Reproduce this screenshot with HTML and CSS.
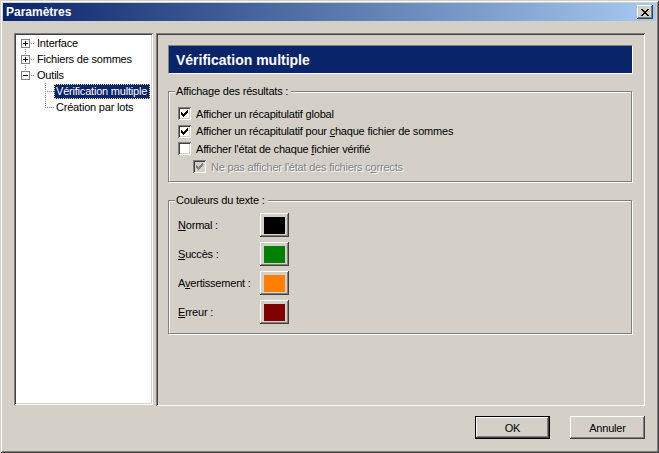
FILE: index.html
```html
<!DOCTYPE html>
<html lang="fr">
<head>
<meta charset="utf-8">
<title>Paramètres</title>
<link rel="stylesheet" href="styles.css">
</head>
<body>
<div class="window">
  <div class="titlebar">
    <span class="title">Paramètres</span>
    <button class="close" type="button" aria-label="Fermer">
      <svg width="8" height="7" viewBox="0 0 8 7" shape-rendering="crispEdges"><path fill="#000" d="M0 0h2v1h-2z M6 0h2v1h-2z M1 1h2v1h-2z M5 1h2v1h-2z M2 2h4v1h-4z M3 3h2v1h-2z M2 4h4v1h-4z M1 5h2v1h-2z M5 5h2v1h-2z M0 6h2v1h-2z M6 6h2v1h-2z"/></svg>
    </button>
  </div>
  <div class="client">
    <div class="main">
      <div class="tree">
        <div class="node">
          <svg class="gut0" width="19" height="16" viewBox="0 0 19 16" shape-rendering="crispEdges">
            <rect x="5.5" y="4.5" width="8" height="8" fill="#fff" stroke="#808080"/>
            <path fill="#000" d="M7 8h5v1h-5z M9 6h1v5h-1z"/>
            <path fill="#808080" d="M15 8h1v1h-1z M17 8h1v1h-1z M9 14h1v1h-1z"/>
          </svg>
          <span class="label">Interface</span>
        </div>
        <div class="node">
          <svg class="gut0" width="19" height="16" viewBox="0 0 19 16" shape-rendering="crispEdges">
            <rect x="5.5" y="4.5" width="8" height="8" fill="#fff" stroke="#808080"/>
            <path fill="#000" d="M7 8h5v1h-5z M9 6h1v5h-1z"/>
            <path fill="#808080" d="M15 8h1v1h-1z M17 8h1v1h-1z M9 0h1v1h-1z M9 2h1v1h-1z M9 14h1v1h-1z"/>
          </svg>
          <span class="label">Fichiers de sommes</span>
        </div>
        <div class="node">
          <svg class="gut0" width="19" height="16" viewBox="0 0 19 16" shape-rendering="crispEdges">
            <rect x="5.5" y="4.5" width="8" height="8" fill="#fff" stroke="#808080"/>
            <path fill="#000" d="M7 8h5v1h-5z"/>
            <path fill="#808080" d="M15 8h1v1h-1z M17 8h1v1h-1z M9 0h1v1h-1z M9 2h1v1h-1z"/>
          </svg>
          <span class="label">Outils</span>
        </div>
        <div class="node">
          <svg class="gut1" width="38" height="16" viewBox="0 0 38 16" shape-rendering="crispEdges">
            <path fill="#808080" d="M29 0h1v1h-1z M29 2h1v1h-1z M29 4h1v1h-1z M29 6h1v1h-1z M29 8h1v1h-1z M29 10h1v1h-1z M29 12h1v1h-1z M29 14h1v1h-1z M31 8h1v1h-1z M33 8h1v1h-1z M35 8h1v1h-1z M37 8h1v1h-1z"/>
          </svg>
          <span class="label selected">Vérification multiple</span>
        </div>
        <div class="node">
          <svg class="gut1" width="38" height="16" viewBox="0 0 38 16" shape-rendering="crispEdges">
            <path fill="#808080" d="M29 0h1v1h-1z M29 2h1v1h-1z M29 4h1v1h-1z M29 6h1v1h-1z M29 8h1v1h-1z M31 8h1v1h-1z M33 8h1v1h-1z M35 8h1v1h-1z M37 8h1v1h-1z"/>
          </svg>
          <span class="label">Création par lots</span>
        </div>
      </div>

      <div class="panel">
        <div class="header">Vérification multiple</div>

        <div class="group g1">
          <div class="legend">Affichage des résultats :</div>
          <div class="checks">
            <div class="crow">
              <span class="cb"><svg width="7" height="7" viewBox="0 0 7 7" shape-rendering="crispEdges"><path d="M0 2h1v3h-1z M1 3h1v3h-1z M2 4h1v3h-1z M3 3h1v3h-1z M4 2h1v3h-1z M5 1h1v3h-1z M6 0h1v3h-1z"/></svg></span>
              <span class="ctext">Afficher un récapitulatif <u>g</u>lobal</span>
            </div>
            <div class="crow">
              <span class="cb"><svg width="7" height="7" viewBox="0 0 7 7" shape-rendering="crispEdges"><path d="M0 2h1v3h-1z M1 3h1v3h-1z M2 4h1v3h-1z M3 3h1v3h-1z M4 2h1v3h-1z M5 1h1v3h-1z M6 0h1v3h-1z"/></svg></span>
              <span class="ctext">Afficher un récapitulatif pour <u>c</u>haque fichier de sommes</span>
            </div>
            <div class="crow">
              <span class="cb"></span>
              <span class="ctext">Afficher l'état de chaque <u>f</u>ichier vérifié</span>
            </div>
            <div class="crow indent disabled">
              <span class="cb"><svg width="7" height="7" viewBox="0 0 7 7" shape-rendering="crispEdges"><path d="M0 2h1v3h-1z M1 3h1v3h-1z M2 4h1v3h-1z M3 3h1v3h-1z M4 2h1v3h-1z M5 1h1v3h-1z M6 0h1v3h-1z"/></svg></span>
              <span class="ctext">Ne pas afficher l'état des fichiers c<u>o</u>rrects</span>
            </div>
          </div>
        </div>

        <div class="group g2">
          <div class="legend">Couleurs du texte :</div>
          <div class="colors">
            <div class="colrow"><span class="lbl"><u>N</u>ormal :</span><span class="swbtn"><span class="sw sw-black"></span></span></div>
            <div class="colrow"><span class="lbl"><u>S</u>uccès :</span><span class="swbtn"><span class="sw sw-green"></span></span></div>
            <div class="colrow"><span class="lbl">A<u>v</u>ertissement :</span><span class="swbtn"><span class="sw sw-orange"></span></span></div>
            <div class="colrow"><span class="lbl"><u>E</u>rreur :</span><span class="swbtn"><span class="sw sw-red"></span></span></div>
          </div>
        </div>
      </div>
    </div>

    <div class="actions">
      <button class="btn default" type="button">OK</button>
      <button class="btn" type="button">Annuler</button>
    </div>
  </div>
</div>
</body>
</html>
```
FILE: styles.css
```css
* { box-sizing: border-box; }

html, body {
  margin: 0;
  padding: 0;
  background: #D4D0C8;
}

body {
  font-family: "Liberation Sans", Arial, sans-serif;
  font-size: 11px;
  letter-spacing: -0.2px;
  color: #000;
}

u { text-underline-offset: 1px; }

.window {
  width: 659px;
  height: 453px;
  padding: 3px;
  background: #D4D0C8;
  display: flex;
  flex-direction: column;
  box-shadow: inset 1px 1px #D4D0C8, inset -1px -1px #404040, inset 2px 2px #fff, inset -2px -2px #808080;
}

.titlebar {
  height: 18px;
  display: flex;
  align-items: center;
  padding: 0 3px 0 3px;
  background: linear-gradient(to right, #0A246A, #A6CAF0);
}

.title {
  flex: 1;
  color: #fff;
  font-weight: bold;
  font-size: 12px;
  letter-spacing: 0;
}

.close {
  width: 16px;
  height: 14px;
  margin: 0;
  border: 0;
  padding: 4px 0 0 4px;
  background: #D4D0C8;
  display: flex;
  align-items: flex-start;
  justify-content: flex-start;
  box-shadow: inset -1px -1px #404040, inset 1px 1px #fff, inset -2px -2px #808080;
}

.close svg { display: block; }

.client {
  flex: 1;
  display: flex;
  flex-direction: column;
  padding: 12px 11px 11px 11px;
}

.main {
  display: flex;
  gap: 3px;
  align-items: flex-start;
}

.tree {
  width: 139px;
  height: 372px;
  padding: 2px;
  background: #fff;
  box-shadow: inset 1px 1px #808080, inset -1px -1px #fff, inset 2px 2px #404040, inset -2px -2px #D4D0C8;
}

.node {
  height: 16px;
  display: flex;
  align-items: flex-start;
}

.node svg { display: block; flex: none; }

.label {
  height: 15px;
  margin-top: 1px;
  line-height: 13px;
  padding: 0 2px 0 1px;
  border: 1px solid transparent;
  white-space: nowrap;
}

.label.selected {
  background: #0A246A;
  color: #fff;
  border: 1px dotted #F5DB95;
}

.panel {
  width: 489px;
  height: 373px;
  padding: 12px;
  display: flex;
  flex-direction: column;
  box-shadow: inset 1px 1px #808080, inset -1px -1px #fff, inset 2px 2px #404040, inset -2px -2px #D4D0C8;
}

.header {
  height: 29px;
  flex: none;
  padding-left: 7px;
  display: flex;
  align-items: center;
  background: #0A246A;
  color: #fff;
  font-weight: bold;
  font-size: 14px;
  letter-spacing: 0;
  border: 1px solid;
  border-color: #808080 #fff #fff #808080;
}

.group {
  flex: none;
  margin-right: 1px;
  padding: 0 8px 0 9px;
  display: flex;
  flex-direction: column;
  border: 1px solid #808080;
  box-shadow: inset 1px 1px #fff, 1px 1px #fff;
}

.g1 { margin-top: 17px; height: 91px; }
.g2 { margin-top: 18px; height: 134px; }

.legend {
  align-self: flex-start;
  margin: -7px 0 0 -3px;
  padding: 0 3px 0 1px;
  line-height: 13px;
  background: #D4D0C8;
}

.checks { margin-top: 7px; }

.crow {
  height: 17.6px;
  display: flex;
  align-items: center;
  gap: 5px;
}

.crow.indent { padding-left: 15px; }

.cb {
  width: 13px;
  height: 13px;
  flex: none;
  padding: 3px 0 0 3px;
  background: #fff;
  box-shadow: inset 1px 1px #808080, inset -1px -1px #fff, inset 2px 2px #404040, inset -2px -2px #D4D0C8;
}

.cb svg { display: block; fill: #000; }

.crow.disabled .cb { background: #D4D0C8; }
.crow.disabled .cb svg { fill: #808080; }
.crow.disabled .ctext { color: #808080; text-shadow: 1px 1px #fff; }

.ctext { white-space: nowrap; }

.colors {
  margin-top: 6px;
  display: flex;
  flex-direction: column;
  gap: 5px;
}

.colrow {
  height: 24px;
  display: flex;
  align-items: center;
}

.lbl { width: 82px; flex: none; }

.swbtn {
  width: 29px;
  height: 24px;
  padding: 4px 4px 3px 4px;
  background: #D4D0C8;
  box-shadow: inset -1px -1px #404040, inset 1px 1px #fff, inset -2px -2px #808080;
}

.sw { display: block; width: 21px; height: 17px; }
.sw-black { background: #000; }
.sw-green { background: #008000; }
.sw-orange { background: #FF8000; }
.sw-red { background: #800000; }

.actions {
  margin-top: 10px;
  display: flex;
  justify-content: flex-end;
  gap: 20px;
}

.btn {
  width: 75px;
  height: 23px;
  margin: 0;
  padding: 0;
  border: 0;
  background: #D4D0C8;
  font-family: inherit;
  font-size: 11px;
  letter-spacing: -0.2px;
  color: #000;
  box-shadow: inset -1px -1px #404040, inset 1px 1px #fff, inset -2px -2px #808080;
}

.btn.default {
  border: 1px solid #000;
  box-shadow: inset -1px -1px #404040, inset 1px 1px #fff, inset -2px -2px #808080;
}
```
